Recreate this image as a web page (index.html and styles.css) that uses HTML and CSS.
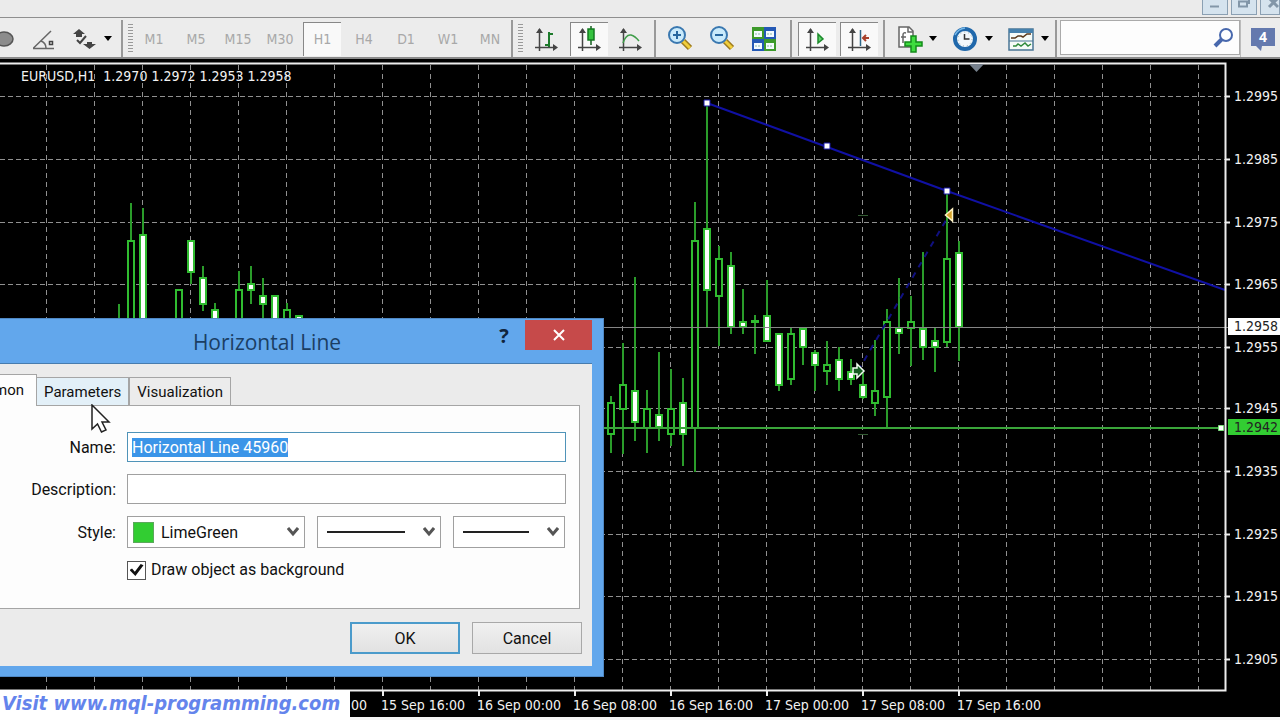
FILE: index.html
```html
<!DOCTYPE html>
<html lang="en">
<head>
<meta charset="utf-8">
<title>EURUSD,H1</title>
<link rel="stylesheet" href="styles.css">
</head>
<body>
<header class="caption">
  <button class="win" aria-label="Minimize"><svg width="24" height="14"><path d="M7 6.500h9" stroke="#8296a8" stroke-width="2"/></svg></button>
  <button class="win" aria-label="Restore"><svg width="24" height="14"><path d="M7 1.500h8v5h-8zM10 0V-2M16 3h1V-2" fill="none" stroke="#8296a8" stroke-width="2"/></svg></button>
  <button class="win" aria-label="Close"><svg width="24" height="14"><path d="M8 -2l9 9M17 -2l-9 9" stroke="#8296a8" stroke-width="3"/></svg></button>
</header>

<nav class="toolbar" aria-label="Chart tools">
  <div class="group group-draw">
    <button class="tool" aria-label="Ellipse"><svg width="28" height="28"><ellipse cx="13" cy="14" rx="9" ry="7" fill="#8c8c8c" stroke="#555" stroke-width="1.500"/></svg></button>
    <button class="tool" aria-label="Angle"><svg width="28" height="28"><path d="M4 23.500h21M4.500 23L22 6M12 16q5 2 5 7" fill="none" stroke="#666" stroke-width="1.500"/><rect x="20.500" y="16.500" width="3" height="3" fill="none" stroke="#444" stroke-width="1.500"/></svg></button>
    <button class="tool tool-menu" aria-label="Arrows"><svg width="28" height="28"><path d="M9 4l6 5h-3v3H6V9H3zM17 17h5v2h4l-6.500 5-6.500-5h4z" fill="#444"/><path d="M7 15l3 3 6-7" stroke="#444" stroke-width="2" fill="none"/></svg><svg class="caret" width="8" height="5"><path d="M0 0h8l-4 5z"/></svg></button>
  </div>
  <div class="group group-period">
    <i class="grip"></i>
    <button class="tool">M1</button><button class="tool">M5</button><button class="tool">M15</button><button class="tool">M30</button><button class="tool pressed">H1</button><button class="tool">H4</button><button class="tool">D1</button><button class="tool">W1</button><button class="tool">MN</button>
  </div>
  <div class="group group-type">
    <i class="grip"></i>
    <button class="tool" aria-label="Bar chart"><svg width="28" height="28"><use href="#axes"/><path d="M12 20h4M16 22V7M16 9h4" fill="none" stroke="#1c7a2b" stroke-width="2"/></svg></button>
    <button class="tool pressed" aria-label="Candlesticks"><svg width="28" height="28"><use href="#axes"/><path d="M15 1v19" stroke="#145c1e" stroke-width="1.500"/><rect x="12" y="4" width="6" height="11" fill="#35c33f" stroke="#137a20" stroke-width="1.500"/></svg></button>
    <button class="tool" aria-label="Line chart"><svg width="28" height="28"><use href="#axes"/><path d="M6 18q3-9 8-8q4 1 8 6" fill="none" stroke="#3f9d49" stroke-width="1.500"/></svg></button>
  </div>
  <div class="group group-zoom">
    <button class="tool" aria-label="Zoom in"><svg width="28" height="28"><use href="#lens"/><path d="M7 10h8M11 6v8" stroke="#27679f" stroke-width="2"/></svg></button>
    <button class="tool" aria-label="Zoom out"><svg width="28" height="28"><use href="#lens"/><path d="M7 10h8" stroke="#27679f" stroke-width="2"/></svg></button>
    <button class="tool" aria-label="Tile windows"><svg width="28" height="28"><path d="M2 2h12v12H2zM14 14h12v12H14z" fill="#3d9a2b"/><path d="M14 2h12v12H14zM2 14h12v12H2z" fill="#2459b5"/><path d="M4 6h8v6H4zM16 6h8v6h-8zM4 18h8v6H4zM16 18h8v6h-8z" fill="#f3fbff"/><path d="M5 9h6M17 9h6M5 21h6M17 21h6" stroke="#8bb8a5" stroke-dasharray="2 1"/></svg></button>
  </div>
  <div class="group group-scroll">
    <button class="tool pressed" aria-label="Auto scroll"><svg width="28" height="28"><use href="#axes"/><path d="M14 9l5 5-5 4z" fill="#5fd36b" stroke="#1c8a2b" stroke-width="1.500"/></svg></button>
    <button class="tool pressed" aria-label="Chart shift"><svg width="28" height="28"><use href="#axes"/><path d="M14.500 5v16" stroke="#2d6687" stroke-width="1.500"/><path d="M23 13h-6M20 10l-3 3 3 3" fill="none" stroke="#a8402a" stroke-width="2"/></svg></button>
  </div>
  <div class="group group-extra">
    <button class="tool tool-menu" aria-label="Indicators"><svg width="28" height="28"><path d="M4 2h10l4 4v16H4z" fill="#fff" stroke="#666" stroke-width="1.500"/><path d="M13 2v5h5M11 8q-3-1-3 2v8M6 12h5" fill="none" stroke="#666" stroke-width="1.500"/><path d="M16 11h5v6h6v4h-6v6h-5v-6h-6v-4h6z" fill="#3fdc3f" stroke="#158a1b" stroke-width="1.500"/></svg><svg class="caret" width="8" height="5"><path d="M0 0h8l-4 5z"/></svg></button>
    <button class="tool tool-menu" aria-label="Periods"><svg width="28" height="28"><circle cx="14" cy="14" r="10" fill="#f1f7fb" stroke="#2068ab" stroke-width="4"/><path d="M4 10q3-6 10-7" stroke="#76b8e8" stroke-width="1.500" fill="none"/><path d="M13.500 9v5h5" fill="none" stroke="#333" stroke-width="1.500"/><circle cx="14" cy="14" r="7" fill="none" stroke="#9aa" stroke-dasharray="1 3"/></svg><svg class="caret" width="8" height="5"><path d="M0 0h8l-4 5z"/></svg></button>
    <button class="tool tool-menu" aria-label="Templates"><svg width="28" height="28"><rect x="2" y="4" width="24" height="21" fill="#f6fbf8" stroke="#4a7695" stroke-width="1.500"/><path d="M2 4h24v4H2z" fill="#4681ad"/><path d="M2 16h24" stroke="#4a7695"/><path d="M4 13h4l3-2h3l2 1 4-3h4" fill="none" stroke="#5a3a1c" stroke-width="1.500"/><path d="M6 21h3l2-2 3 2 4-3 3 3 3-2" fill="none" stroke="#2f8a3a" stroke-width="1.500"/></svg><svg class="caret" width="8" height="5"><path d="M0 0h8l-4 5z"/></svg></button>
  </div>
  <div class="search">
    <input class="search-box" type="text" aria-label="Search">
    <svg class="search-icon" width="22" height="22"><circle cx="13" cy="8" r="6" fill="#fff" stroke="#4868ad" stroke-width="2"/><path d="M9 12l-7 7" stroke="#4868ad" stroke-width="4"/></svg>
  </div>
  <button class="notice" aria-label="4 notifications"><svg width="24" height="24"><path d="M0 1h24v18H11l-1 5-5-5H0z" fill="#6479ae"/></svg><span class="notice-count">4</span></button>
</nav>

<main class="chart">
  <svg class="plot" id="plot" viewBox="0 59 1280 658" preserveAspectRatio="xMinYMin slice">
    <defs>
      <g id="axes"><path d="M6.500 4v22M2 22.500h19" stroke="#444" stroke-width="1.500" fill="none"/><path d="M3 8l3.500-5L10 8zM20 19l5 3.500-5 3.500z" fill="#444"/></g>
      <g id="lens"><path d="M17 16l7 7" stroke="#9c7a1d" stroke-width="6"/><path d="M17 16l7 7" stroke="#f1ce3c" stroke-width="3"/><circle cx="11" cy="10" r="8" fill="#c9eafb" stroke="#3a78b0" stroke-width="2"/></g>
    </defs>
    <g id="grid"></g>
    <g id="candles"></g>
    <path d="M0 327.500H1228" class="bid"/>
    <path d="M0 428H1222" class="level"/>
    <path d="M858 371L949 215" class="deal"/>
    <path d="M707 103L947 191L1225 290" class="trend"/>
    <path d="M858 215.500h10M858 434.500h10" class="mark"/>
    <path d="M704 100h6v6h-6zM824 143h6v6h-6zM944 188h6v6h-6z" class="handle"/>
    <path d="M945.500 215l7-6v12z" fill="#d6a32a" stroke="#fff3c4" stroke-width="1.500"/>
    <path d="M853 368h4v-4l7 7-7 7v-4h-4z" fill="#155c20" stroke="#f2fff2" stroke-width="1.500"/>
    <path d="M0 63.500H1225.500V690.500H0" class="frame"/>
    <path d="M1218.500 425.500h5v5h-5z" fill="#fff" stroke="#7fe07f"/>
    <path d="M969 64h15l-7.500 8z" fill="#76808c"/>
    <g id="axis"></g>
    <path d="M1228 318h52v17h-52z" fill="#fff"/>
    <path d="M1228 419h52v16h-52z" fill="#32cd32"/>
    <text x="1234" y="331" class="tag">1.2958</text>
    <text x="1234" y="432" class="tag">1.2942</text>
    <text x="21" y="81" class="label quote">EURUSD,H1  1.2970 1.2972 1.2953 1.2958</text>
  </svg>

  <a class="banner" href="#site">Visit www.mql-programming.com</a>

  <section class="dialog" role="dialog" aria-labelledby="dlg-title">
    <div class="titlebar">
      <h1 class="title" id="dlg-title">Horizontal Line</h1>
      <div class="title-buttons">
        <button class="help" aria-label="Help">?</button>
        <button class="close" aria-label="Close"><svg width="12" height="12"><path d="M1 1l10 10M11 1L1 11" stroke="#fff" stroke-width="2"/></svg></button>
      </div>
    </div>
    <form class="content">
      <div class="tabs" role="tablist">
        <button type="button" class="tab active" role="tab">Common</button>
        <button type="button" class="tab hover" role="tab">Parameters</button>
        <button type="button" class="tab" role="tab">Visualization</button>
      </div>
      <div class="panel">
        <label class="name" for="name">Name:</label>
        <input class="field" id="name" type="text" value="Horizontal Line 45960">
        <label class="name" for="desc">Description:</label>
        <input class="field" id="desc" type="text">
        <label class="name" for="color">Style:</label>
        <div class="styles">
          <div class="combo combo-color"><i class="swatch"></i><select class="select" id="color"><option>LimeGreen</option></select><svg class="chevron" width="12" height="10"><use href="#chev"/></svg></div>
          <div class="combo combo-line"><select class="select" aria-label="Line style"><option></option></select><i class="stroke"></i><svg class="chevron" width="12" height="10"><use href="#chev"/></svg></div>
          <div class="combo combo-width"><select class="select" aria-label="Line width"><option></option></select><i class="stroke"></i><svg class="chevron" width="12" height="10"><path id="chev" d="M1 1l5 6 5-6" fill="none" stroke="#555" stroke-width="3"/></svg></div>
        </div>
        <label class="check"><input class="tick" type="checkbox" checked>Draw object as background</label>
      </div>
      <div class="actions">
        <button type="button" class="action default">OK</button>
        <button type="button" class="action">Cancel</button>
      </div>
    </form>
  </section>

  <svg class="pointer" width="20" height="30"><path d="M1 1v24l5.500-5 4 8 4.500-2-4-8h7z" fill="#fff" stroke="#222" stroke-width="1.500"/></svg>
</main>
<script src="chart.js"></script>
</body>
</html>
```

FILE: styles.css
```css
* { box-sizing: border-box; }

body {
  margin: 0;
  min-height: 100vh;
  display: flex;
  flex-direction: column;
  overflow: hidden;
  background: #f4f4f4;
  font-family: Roboto, "Liberation Sans", sans-serif;
  font-size: 16px;
  color: #111;
}

button, input, select { font: inherit; color: inherit; }
button { padding: 0; border: 0; background: none; }

.caption {
  height: 17px;
  display: flex;
  justify-content: flex-end;
  gap: 3px;
  background: #ebebeb;
}
.win {
  width: 26px;
  height: 15px;
  display: flex;
  border: 1px solid #8ba0b3;
  border-top: 0;
  background: #d5e3ee;
}
.win:last-child { width: 20px; overflow: hidden; }

.toolbar {
  height: 42px;
  display: flex;
  align-items: stretch;
  padding-top: 2px;
  border-top: 1px solid #8f8f8f;
  border-bottom: 2px solid #8a8a8a;
  background: #ececec;
}
.group { display: flex; align-items: center; flex: none; border-right: 2px solid #999; }
.group-draw { margin-left: -14px; padding-right: 3px; }
.group-draw .tool:not(.tool-menu) { width: 34px; }
.group-period { padding-left: 5px; }
.group-type { padding: 0 2px 0 5px; }
.group-type .grip { margin-right: 3px; }
.group-zoom { padding: 0 5px 0 3px; }
.group-scroll { padding: 0 3px 0 4px; }
.group-extra { padding-left: 2px; }
.grip {
  width: 5px;
  height: 30px;
  background: repeating-linear-gradient(#999 0 1px, #eee 1px 3px);
}
.tool {
  width: 38px;
  height: 34px;
  margin: 0 2px;
  display: flex;
  align-items: center;
  justify-content: center;
  font-family: "DejaVu Sans Condensed", "DejaVu Sans", sans-serif;
  font-size: 14px;
  color: #a8a8a8;
}
.tool.pressed { background: #f9f9f9; border-top: 1px solid #888; border-left: 1px solid #888; }
.tool-menu { width: 52px; gap: 6px; padding-left: 2px; }
.caret { flex: none; }
.search {
  flex: 1;
  min-width: 60px;
  display: flex;
  align-items: center;
  margin: 0 0 2px 3px;
  border: 1px solid #aaa;
  background: #fdfdfd;
}
.search-box { flex: 1; min-width: 0; border: 0; background: none; outline: 0; }
.search-icon { margin-right: 4px; }
.notice {
  width: 40px;
  padding-left: 10px;
  display: grid;
  align-content: center;
  border-left: 1px solid #bbb;
}
.notice svg, .notice-count { grid-area: 1 / 1; }
.notice-count {
  width: 24px;
  text-align: center;
  line-height: 20px;
  font-family: "Open Sans", sans-serif;
  font-weight: 700;
  font-size: 14px;
  color: #fff;
}

.chart {
  position: relative;
  flex: 1;
  min-height: 0;
  background: #000;
  border-bottom: 3px solid #f4f4f4;
}
.plot { display: block; width: 100%; }
.v, .h { stroke: #909090; fill: none; }
.v { stroke-dasharray: 5 4; }
.h { stroke-dasharray: 5 3; }
.wick { stroke: #2a9c2a; stroke-width: 2; fill: none; }
.body { stroke: #30bc30; stroke-width: 2; fill: #000; }
.body.down { fill: #fff; }
.bid { stroke: #858585; stroke-width: 1; }
.level { stroke: #3aa53a; stroke-width: 2; }
.trend { fill: none; stroke: #1010a4; stroke-width: 2; }
.deal { stroke: #101080; stroke-width: 2; stroke-dasharray: 6 6; }
.mark { stroke: #345c34; }
.handle { fill: #fff; stroke: #1a1aa8; }
.frame { fill: none; stroke: #eee; stroke-width: 2; }
.notch { stroke: #eee; stroke-width: 2; }
.label, .tag {
  font-family: "DejaVu Sans Condensed", "DejaVu Sans", sans-serif;
  font-size: 14px;
  fill: #f2f2f2;
}
.tag { fill: #222; }
.quote { white-space: pre; }

.banner {
  position: absolute;
  left: 0;
  bottom: -3px;
  width: 350px;
  height: 30px;
  padding-left: 2px;
  line-height: 26px;
  white-space: nowrap;
  background: #fff;
  font-family: "DejaVu Sans Condensed", "DejaVu Sans", sans-serif;
  font-style: italic;
  font-weight: 700;
  font-size: 20px;
  color: #6484ec;
  text-decoration: none;
}

.dialog {
  position: absolute;
  left: -70px;
  top: 259px;
  width: 674px;
  padding: 1px 11px 10px;
  border: 1px solid #4f88c4;
  background: #62a7ec;
}
.titlebar { height: 43px; display: grid; }
.title {
  grid-area: 1 / 1;
  margin: 0;
  align-self: center;
  text-align: center;
  font-family: "Open Sans", sans-serif;
  font-weight: 400;
  font-size: 21px;
  line-height: 40px;
  color: #1b3e63;
}
.title-buttons { grid-area: 1 / 1; justify-self: end; display: flex; align-items: flex-start; }
.help { width: 42px; height: 30px; font-family: "Open Sans", sans-serif; font-weight: 700; font-size: 20px; color: #10253d; }
.close { width: 67px; height: 30px; background: #c64a4a; }
.content {
  padding: 10px 12px 12px;
  border-top: 1px solid #477cae;
  background: #ebebeb;
}
.tabs { display: flex; align-items: flex-end; height: 31px; }
.tab {
  height: 28px;
  padding: 0 7px;
  border: 1px solid #a5a5a5;
  border-bottom: 0;
  background: #ececec;
  font-size: 15px;
}
.tab.hover { margin-left: -1px; background: #e3f0f8; }
.tab.active {
  height: 32px;
  width: 83px;
  padding: 0 12px 2px 0;
  margin-bottom: -1px;
  text-align: right;
  background: #fdfdfd;
}
.panel {
  display: grid;
  grid-template-columns: 161px 1fr;
  column-gap: 11px;
  row-gap: 12px;
  align-items: center;
  padding: 26px 13px 28px 0;
  border: 1px solid #a5a5a5;
  background: #fdfdfd;
}
.name { text-align: right; }
.field {
  width: 100%;
  height: 30px;
  padding: 0 4px;
  border: 1px solid #a0a0a0;
  background: #fff;
  outline: 0;
}
.field:focus { border-color: #4f93b8; }
.field::selection { background: #3b95e8; color: #fff; }
.styles { display: flex; gap: 12px; padding-right: 1px; }
.combo {
  height: 32px;
  display: grid;
  align-items: center;
  border: 1px solid #a0a0a0;
  background: #fff;
}
.combo > * { grid-area: 1 / 1; }
.combo-color { flex: 179; }
.combo-line { flex: 123; }
.combo-width { flex: 112; }
.select {
  width: 100%;
  height: 30px;
  appearance: none;
  border: 0;
  background: none;
  padding: 0 24px 0 9px;
}
.combo-color .select { padding-left: 33px; }
.chevron { justify-self: end; margin-right: 5px; }
.swatch { width: 21px; height: 21px; margin-left: 5px; background: #32cd32; border: 1px solid #5ca85c; }
.stroke { height: 2px; margin: 0 35px 0 9px; background: #222; }
.check { grid-column: 2; display: flex; align-items: center; gap: 5px; line-height: 20px; }
.tick {
  appearance: none;
  width: 19px;
  height: 19px;
  margin: 0;
  display: grid;
  place-items: center;
  border: 1px solid #555;
  background: #fff;
}
.tick:checked::before {
  content: "";
  width: 14px;
  height: 12px;
  background: #111;
  clip-path: polygon(0 50%, 18% 38%, 38% 64%, 80% 0, 100% 10%, 42% 100%);
}
.actions { display: flex; justify-content: flex-end; gap: 12px; padding-top: 13px; margin-right: -2px; }
.action {
  width: 110px;
  height: 32px;
  border: 1px solid #a8a8a8;
  background: linear-gradient(#f0f0f0, #e2e2e2);
}
.action.default { border: 2px solid #4b9bcb; }

.pointer { position: absolute; left: 91px; top: 345px; }
```

FILE: chart.js
```js
// Candle data: x, high, low, body top, body bottom, closed lower
const candles = [
  [119, 304, 340, 319, 340, 0], [131, 203, 340, 241, 340, 0], [143, 208, 340, 235, 340, 1],
  [179, 290, 340, 290, 340, 0], [191, 240, 284, 241, 272, 1], [203, 266, 311, 278, 304, 1],
  [215, 303, 340, 310, 340, 1], [239, 271, 340, 290, 340, 0], [251, 266, 304, 284, 290, 1],
  [263, 278, 340, 296, 304, 1], [275, 296, 340, 296, 340, 1], [287, 303, 340, 310, 340, 0],
  [299, 316, 340, 316, 340, 1],
  [611, 396, 453, 403, 434, 0], [623, 343, 454, 385, 409, 0], [635, 277, 441, 391, 422, 1],
  [647, 390, 453, 409, 428, 0], [659, 352, 441, 415, 427, 1], [671, 369, 446, 409, 434, 0],
  [683, 378, 466, 403, 434, 1], [695, 202, 472, 241, 428, 0], [707, 103, 328, 229, 290, 1],
  [719, 246, 346, 259, 296, 0], [731, 252, 334, 266, 327, 1], [743, 289, 334, 322, 327, 1],
  [755, 315, 354, 321, 322, 0], [767, 280, 342, 316, 341, 1], [779, 333, 391, 334, 385, 1],
  [791, 328, 385, 334, 379, 0], [803, 328, 365, 329, 347, 1], [815, 350, 391, 353, 365, 1],
  [827, 341, 385, 365, 371, 0], [839, 347, 391, 360, 379, 1], [851, 359, 385, 372, 379, 1],
  [863, 373, 399, 385, 397, 1], [875, 340, 416, 391, 403, 0], [887, 309, 428, 322, 397, 0],
  [899, 278, 354, 328, 333, 1], [911, 296, 366, 322, 328, 0], [923, 252, 360, 329, 347, 1],
  [935, 328, 372, 341, 347, 1], [947, 191, 347, 259, 342, 0], [959, 241, 361, 253, 327, 1]
];
const prices = [96, 159, 222, 284, 347, 408, 471, 534, 596, 659];
const times = ["15 Sep 16:00", "16 Sep 00:00", "16 Sep 08:00",
  "16 Sep 16:00", "17 Sep 00:00", "17 Sep 08:00", "17 Sep 16:00"];

let grid = "";
for (let x = 46.5; x < 1225; x += 48) grid += `<path class="v" d="M${x} 65V690"/>`;
let axis = `<text class="label" x="351" y="710">00</text>`;
prices.forEach((y, i) => {
  grid += `<path class="h" d="M0 ${y + 0.5}H1225"/>`;
  axis += `<path class="notch" d="M1226 ${y + 0.5}h4"/>` +
    `<text class="label" x="1234" y="${y + 5}">1.2${995 - i * 10}</text>`;
});
times.forEach((t, i) => {
  const x = 382 + i * 96;
  axis += `<path class="notch" d="M${x + 1} 691v5"/><text class="label" x="${x - 1}" y="710">${t}</text>`;
});
document.getElementById("grid").innerHTML = grid;
document.getElementById("axis").innerHTML = axis;
document.getElementById("candles").innerHTML = candles.map(([x, hi, lo, top, bottom, down]) =>
  `<path class="wick" d="M${x} ${hi}V${lo}"/>` +
  (x === 119 ? "" : `<rect class="body${down ? " down" : ""}" x="${x - 3}" y="${top}" width="6" height="${bottom - top}"/>`)
).join("");

const nameField = document.getElementById("name");
nameField.focus();
nameField.select();
```
